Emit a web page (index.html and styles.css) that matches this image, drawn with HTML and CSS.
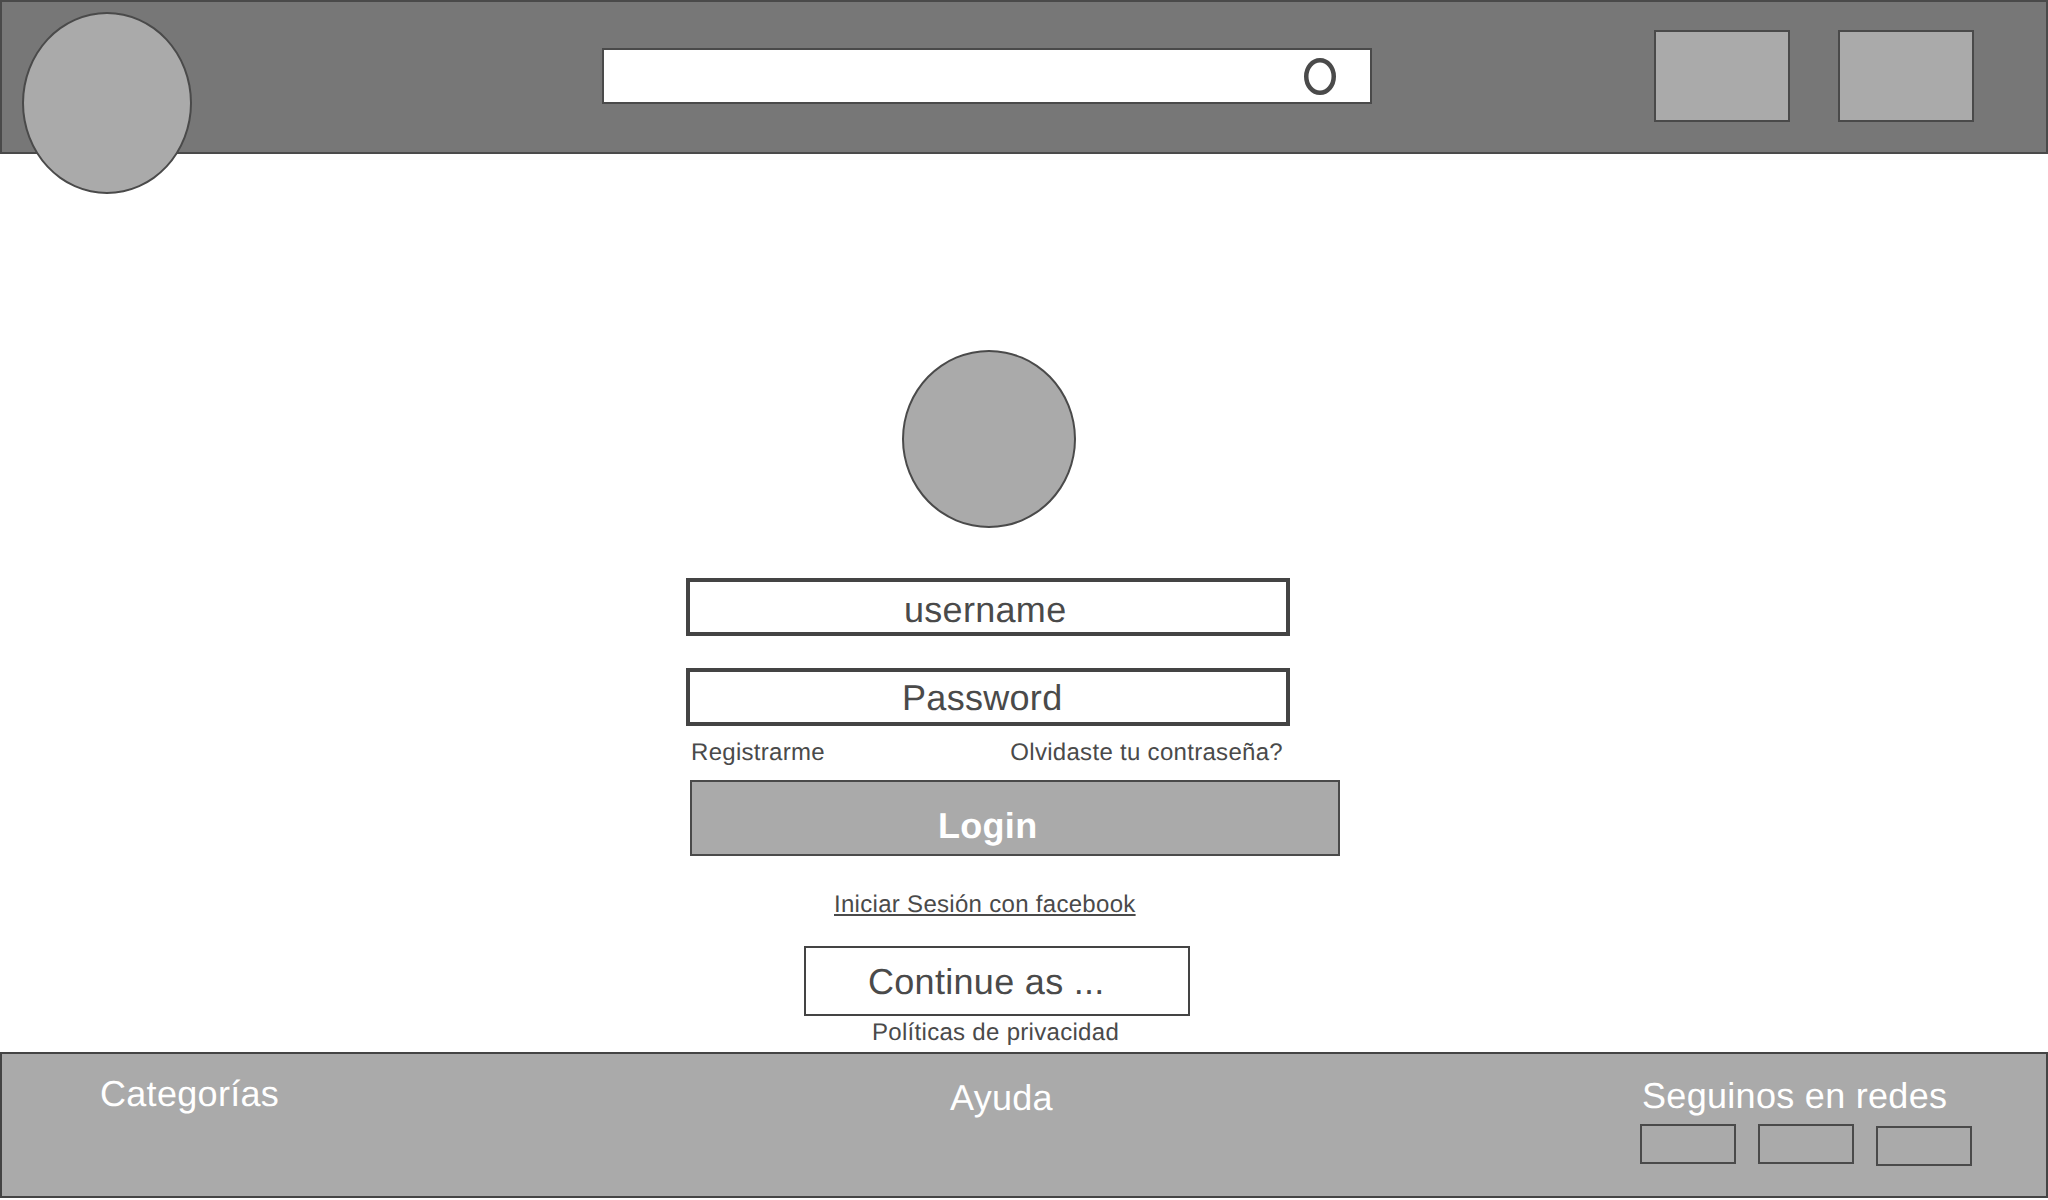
FILE: index.html
```html
<!DOCTYPE html>
<html>
<head>
  <title>Login</title>
  <link rel="stylesheet" href="styles.css">
</head>
<body>
  <header class="topbar">
    <div class="logo"></div>
    <div class="search">
      <svg class="search-icon" width="32" height="37" viewBox="0 0 32 37">
        <ellipse cx="16" cy="18.5" rx="13.75" ry="16.25" fill="none" stroke="#4a4a4a" stroke-width="4.5"/>
      </svg>
    </div>
    <div class="top-btn top-btn-first"></div>
    <div class="top-btn top-btn-second"></div>
  </header>

  <main class="content">
    <div class="avatar"></div>
    <div class="field field-user">username</div>
    <div class="field field-pass">Password</div>
    <div class="links">
      <span>Registrarme</span>
      <span>Olvidaste tu contraseña?</span>
    </div>
    <div class="login-btn">Login</div>
    <a class="fb-link">Iniciar Sesión con facebook</a>
    <div class="continue-btn">Continue as ...</div>
    <div class="privacy">Políticas de privacidad</div>
  </main>

  <footer class="footer">
    <div class="footer-title footer-cat">Categorías</div>
    <div class="footer-title footer-help">Ayuda</div>
    <div class="footer-social">
      <div class="footer-title">Seguinos en redes</div>
      <div class="social-row">
        <div class="social-box"></div>
        <div class="social-box"></div>
        <div class="social-box social-box-low"></div>
      </div>
    </div>
  </footer>
</body>
</html>
```

FILE: styles.css
```css
body {
  margin: 0;
  height: 1200px;
  overflow: hidden;
  background-color: #fff;
  color: #4a4a4a;
  font-family: "Liberation Sans", Arial, sans-serif;
  font-size: 24px;
  line-height: 28px;
  letter-spacing: 0.3px;
  text-rendering: geometricPrecision;
}

/* Top bar */
.topbar {
  position: relative;
  box-sizing: border-box;
  display: flex;
  align-items: center;
  height: 154px;
  padding: 0 0 2px 600px;
  background-color: #777;
  border: 2px solid #4a4a4a;
}
.logo {
  position: absolute;
  top: 10px;
  left: 20px;
  box-sizing: border-box;
  width: 170px;
  height: 182px;
  background-color: #aaa;
  border: 2px solid #4a4a4a;
  border-radius: 50%;
}
.search {
  box-sizing: border-box;
  display: flex;
  align-items: center;
  justify-content: flex-end;
  width: 770px;
  height: 56px;
  padding-right: 34px;
  background-color: #fff;
  border: 2px solid #4a4a4a;
}
.search-icon {
  display: block;
}
.top-btn {
  box-sizing: border-box;
  width: 136px;
  height: 92px;
  background-color: #aaa;
  border: 2px solid #4a4a4a;
}
.top-btn-first {
  margin-left: 282px;
}
.top-btn-second {
  margin-left: 48px;
}

/* Login form */
.content {
  display: flex;
  flex-direction: column;
  align-items: flex-start;
  height: 898px;
}
.avatar {
  box-sizing: border-box;
  width: 174px;
  height: 178px;
  margin: 196px 0 0 902px;
  background-color: #aaa;
  border: 2px solid #4a4a4a;
  border-radius: 50%;
}
.field {
  box-sizing: border-box;
  width: 604px;
  height: 58px;
  margin-left: 686px;
  background-color: #fff;
  border: 4px solid #444;
  font-size: 36px;
  line-height: 40px;
}
.field-user {
  margin-top: 50px;
  padding: 8px 0 0 214px;
}
.field-pass {
  margin-top: 32px;
  padding: 6px 0 0 212px;
}
.links {
  display: flex;
  justify-content: space-between;
  width: 592px;
  margin: 13px 0 0 691px;
}
.login-btn {
  box-sizing: border-box;
  width: 650px;
  height: 76px;
  margin: 13px 0 0 690px;
  padding: 24px 0 0 246px;
  background-color: #aaa;
  border: 2px solid #4a4a4a;
  color: #fff;
  font-size: 36px;
  font-weight: bold;
  line-height: 40px;
}
.fb-link {
  margin: 35px 0 0 834px;
  text-decoration: underline;
}
.continue-btn {
  box-sizing: border-box;
  width: 386px;
  height: 70px;
  margin: 27px 0 0 804px;
  padding: 14px 0 0 62px;
  border: 2px solid #444;
  font-size: 36px;
  line-height: 40px;
}
.privacy {
  margin: 3px 0 0 872px;
}

/* Footer */
.footer {
  box-sizing: border-box;
  display: grid;
  grid-template-columns: 850px 689px 1fr;
  align-items: start;
  height: 146px;
  padding-left: 98px;
  background-color: #aaa;
  border: 2px solid #444;
}
.footer-title {
  color: #fff;
  font-size: 36px;
  line-height: 40px;
}
.footer-cat {
  margin-top: 20px;
}
.footer-help {
  margin-top: 24px;
}
.footer-social {
  margin-top: 22px;
}
.footer-social .footer-title {
  padding-left: 3px;
}
.social-row {
  display: flex;
  align-items: flex-start;
  gap: 22px;
  margin-top: 8px;
  margin-left: 1px;
}
.social-box {
  box-sizing: border-box;
  width: 96px;
  height: 40px;
  border: 2px solid #4a4a4a;
}
.social-box-low {
  margin-top: 2px;
}
```
